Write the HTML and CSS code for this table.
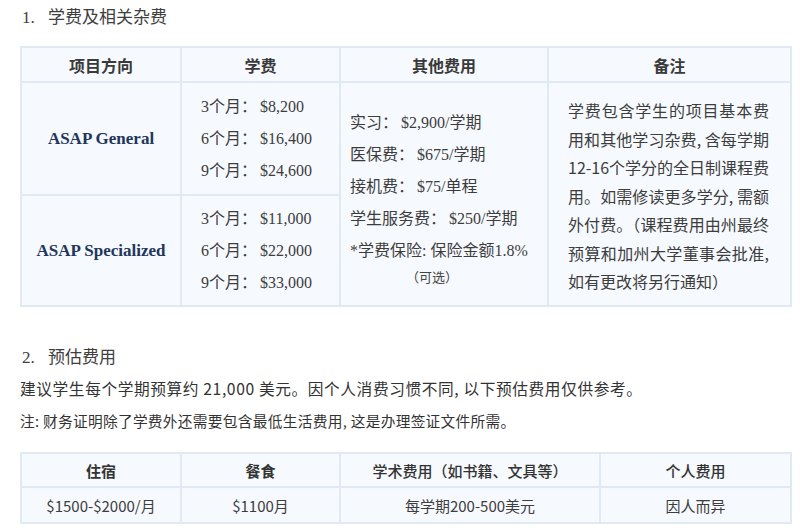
FILE: index.html
```html
<!DOCTYPE html>
<html lang="zh-CN">
<head>
<meta charset="utf-8">
<title>学费及相关杂费</title>
<link rel="stylesheet" href="styles.css">
</head>
<body>
<h3 class="sec-title sec-first"><span class="num">1.</span>学费及相关杂费</h3>
<table class="fees">
  <colgroup>
    <col class="c1"><col class="c2"><col class="c3"><col class="c4">
  </colgroup>
  <thead>
    <tr class="head"><th>项目方向</th><th>学费</th><th>其他费用</th><th>备注</th></tr>
  </thead>
  <tbody>
    <tr class="r1">
      <td class="prog">ASAP General</td>
      <td class="tuition">
        <div class="line">3个月：<span class="amt">$8,200</span></div>
        <div class="line">6个月：<span class="amt">$16,400</span></div>
        <div class="line">9个月：<span class="amt">$24,600</span></div>
      </td>
      <td class="other" rowspan="2">
        <div class="line">实习：<span class="amt">$2,900/学期</span></div>
        <div class="line">医保费：<span class="amt">$675/学期</span></div>
        <div class="line">接机费：<span class="amt">$75/单程</span></div>
        <div class="line">学生服务费：<span class="amt">$250/学期</span></div>
        <div class="line">*学费保险: 保险金额1.8%</div>
        <div class="opt">（可选）</div>
      </td>
      <td class="notes" rowspan="2">
        <span class="nl">学费包含学生的项目基本费</span>
        <span class="nl">用和其他学习杂费, 含每学期</span>
        <span class="nl">12-16个学分的全日制课程费</span>
        <span class="nl">用。如需修读更多学分, 需额</span>
        <span class="nl">外付费。（课程费用由州最终</span>
        <span class="nl">预算和加州大学董事会批准,</span>
        <span class="nl last">如有更改将另行通知）</span>
      </td>
    </tr>
    <tr class="r2">
      <td class="prog">ASAP Specialized</td>
      <td class="tuition">
        <div class="line">3个月：<span class="amt">$11,000</span></div>
        <div class="line">6个月：<span class="amt">$22,000</span></div>
        <div class="line">9个月：<span class="amt">$33,000</span></div>
      </td>
    </tr>
  </tbody>
</table>

<h3 class="sec-title sec-second"><span class="num">2.</span>预估费用</h3>
<p class="lead">建议学生每个学期预算约 21,000 美元。因个人消费习惯不同, 以下预估费用仅供参考。</p>
<p class="note">注: 财务证明除了学费外还需要包含最低生活费用, 这是办理签证文件所需。</p>

<table class="est">
  <colgroup>
    <col class="c1"><col class="c2"><col class="e3"><col class="e4">
  </colgroup>
  <thead>
    <tr class="ehead"><th class="strong">住宿</th><th class="strong">餐食</th><th>学术费用（如书籍、文具等）</th><th>个人费用</th></tr>
  </thead>
  <tbody>
    <tr class="ebody"><td>$1500-$2000/月</td><td>$1100月</td><td>每学期200-500美元</td><td>因人而异</td></tr>
  </tbody>
</table>
</body>
</html>
```

FILE: styles.css
```css
html, body {
  margin: 0;
  padding: 0;
  background: #ffffff;
}
body {
  padding: 0 10px 0 20px;
  font-family: "Noto Sans CJK SC", "Noto Sans", sans-serif;
  color: #3d3d3d;
}
.sec-title {
  margin: 0;
  font-size: 17px;
  line-height: 24px;
  font-weight: 400;
  color: #404040;
  padding-left: 2px;
}
.sec-title .num {
  display: inline-block;
  width: 26px;
  font-family: "Liberation Serif", serif;
}
.sec-first {
  margin-top: 4px;
  margin-bottom: 16px;
}
.sec-second {
  margin-top: 37px;
  margin-bottom: 7px;
}
table {
  border-collapse: collapse;
  table-layout: fixed;
  width: 770px;
  background: #f6f9fd;
}
th, td {
  border: 2px solid #e0e9f4;
  padding: 0;
  text-align: center;
  vertical-align: middle;
}
col.c1 { width: 160px; }
col.c2 { width: 159px; }
col.c3 { width: 208px; }
col.c4 { width: 243px; }
col.e3 { width: 260px; }
col.e4 { width: 191px; }

.fees .head th {
  height: 33px;
  font-size: 16px;
  font-weight: 700;
  color: #3a3a3a;
}
.fees .r1 td.prog, .fees .r1 td.tuition { height: 111px; }
.fees .r2 td.prog, .fees .r2 td.tuition { height: 109px; }
.prog {
  font-family: "Liberation Serif", serif;
  font-weight: 700;
  font-size: 17px;
  color: #22365c;
}
.tuition, .other {
  text-align: left;
  font-family: "Liberation Serif", "Noto Sans CJK SC", serif;
  font-size: 16px;
  color: #3d3d3d;
}
.tuition { padding-left: 19px; }
.tuition .line {
  line-height: 32px;
  white-space: nowrap;
}
.amt { margin-left: 3px; }
.other {
  padding: 6px 0 0 9px;
}
.other .line {
  line-height: 32px;
  white-space: nowrap;
}
.other .opt {
  font-family: "Noto Sans CJK SC", sans-serif;
  font-size: 13px;
  line-height: 20px;
  padding-left: 56px;
  color: #444;
}
.notes {
  padding: 4px 21px 0 19px;
  font-size: 16px;
  color: #3d3d3d;
  text-align: left;
}
.notes .nl {
  display: block;
  line-height: 28.5px;
  white-space: nowrap;
  text-align: justify;
  text-align-last: justify;
}
.notes .nl.last {
  text-align-last: left;
}

.lead {
  margin: 0;
  font-size: 15.7px;
  line-height: 24px;
  letter-spacing: 0.6px;
  color: #333;
}
.note {
  margin: 9px 0 0 0;
  font-size: 14.7px;
  line-height: 22px;
  letter-spacing: 0.3px;
  color: #333;
}
.est {
  margin-top: 20px;
}
.est .ehead th {
  height: 32px;
  font-size: 15px;
  font-weight: 500;
  color: #333;
}
.est .ehead th.strong {
  font-weight: 700;
}
.est .ebody td {
  height: 34px;
  font-size: 15px;
  color: #3d3d3d;
}
```
